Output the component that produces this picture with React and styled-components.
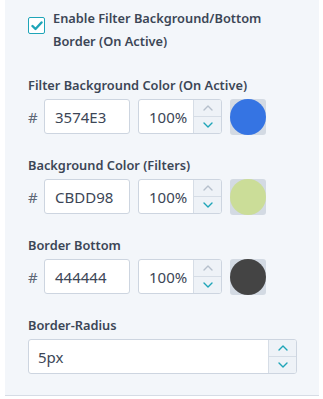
import React from 'react';
import styled, { createGlobalStyle } from 'styled-components';

const Global = createGlobalStyle`
    html, body { margin: 0; padding: 0; background: #ffffff; }
    body { font-family: "Noto Sans", "Open Sans", sans-serif; }
`;

const Panel = styled.section`
    margin-left: 5px;
    width: 314px;
    box-sizing: border-box;
    background: #f3f6fa;
    border-bottom: 1px solid #d6dce5;
    padding: 7px 0 21px 23px;
`;

const CheckRow = styled.label`
    display: flex;
    align-items: flex-start;
    gap: 8px;
    margin-bottom: 23px;
`;

const Box = styled.span`
    flex: none;
    width: 17px;
    height: 17px;
    margin-top: 10px;
    box-sizing: border-box;
    border: 1.5px solid #1fa5b8;
    border-radius: 2px;
    background: #fff;
    display: flex;
    align-items: center;
    justify-content: center;
`;

const CheckText = styled.span`
    font-size: 12.8px;
    font-weight: 600;
    line-height: 23px;
    color: #3c4656;
    width: 230px;
`;

const Section = styled.div`
    margin-bottom: ${p => (p.last ? 0 : 22)}px;
`;

const Label = styled.div`
    font-size: 12.8px;
    font-weight: 600;
    line-height: 18px;
    color: #3c4656;
    margin-bottom: 5px;
`;

const Row = styled.div`
    display: flex;
    align-items: center;
    height: 35px;
`;

const Hash = styled.span`
    width: 16px;
    font-size: 15px;
    color: #5d6776;
`;

const Field = styled.div`
    box-sizing: border-box;
    height: 35px;
    width: ${p => p.w}px;
    margin-right: ${p => p.mr || 0}px;
    background: #fff;
    border: 1px solid #cdd5e0;
    border-radius: 3px;
    display: flex;
    overflow: hidden;
`;

const Value = styled.div`
    flex: 1;
    display: flex;
    align-items: center;
    padding-left: ${p => p.pl}px;
    font-size: 15px;
    color: #3c4656;
`;

const Spin = styled.div`
    flex: none;
    width: 27px;
    border-left: 1px solid #d6dde6;
    background: #eef2f7;
    display: flex;
    flex-direction: column;
`;

const SpinHalf = styled.div`
    flex: 1;
    display: flex;
    align-items: center;
    justify-content: center;
    border-top: ${p => (p.bottom ? '1px solid #d6dde6' : 'none')};
`;

const Swatch = styled.div`
    width: 36px;
    height: 36px;
    background: #d3dae3;
    border-radius: 3px;
    position: relative;
    &::after {
        content: '';
        position: absolute;
        inset: 0;
        border-radius: 50%;
        background: ${p => p.color};
    }
`;

const Chevron = ({ up, color }) => (
    <svg width="10" height="6" viewBox="0 0 10 6">
        <path d={up ? 'M1 5 L5 1 L9 5' : 'M1 1 L5 5 L9 1'} fill="none" stroke={color} strokeWidth="1.4" strokeLinecap="round" strokeLinejoin="round" />
    </svg>
);

const Spinner = ({ upColor }) => (
    <Spin>
        <SpinHalf><Chevron up color={upColor} /></SpinHalf>
        <SpinHalf bottom><Chevron color="#1fa5b8" /></SpinHalf>
    </Spin>
);

const ColorSetting = ({ label, hex, color }) => (
    <Section>
        <Label>{label}</Label>
        <Row>
            <Hash>#</Hash>
            <Field w={86} mr={8}><Value pl={10}>{hex}</Value></Field>
            <Field w={84} mr={8}>
                <Value pl={10}>100%</Value>
                <Spinner upColor="#b6c0cc" />
            </Field>
            <Swatch color={color} />
        </Row>
    </Section>
);

const App = () => {
    return (
        <>
            <Global />
            <Panel>
                <CheckRow>
                    <Box>
                        <svg width="12" height="10" viewBox="0 0 12 10">
                            <path d="M1.5 5 L4.5 8 L10.5 1.5" fill="none" stroke="#1fa5b8" strokeWidth="2.4" strokeLinecap="round" strokeLinejoin="round" />
                        </svg>
                    </Box>
                    <CheckText>Enable Filter Background/Bottom Border (On Active)</CheckText>
                </CheckRow>
                <ColorSetting label="Filter Background Color (On Active)" hex="3574E3" color="#3574e3" />
                <ColorSetting label="Background Color (Filters)" hex="CBDD98" color="#cbdd98" />
                <ColorSetting label="Border Bottom" hex="444444" color="#444444" />
                <Section last>
                    <Label>Border-Radius</Label>
                    <Row>
                        <Field w={269}>
                            <Value pl={9}>5px</Value>
                            <Spinner upColor="#1fa5b8" />
                        </Field>
                    </Row>
                </Section>
            </Panel>
        </>
    );
};

export default App;
